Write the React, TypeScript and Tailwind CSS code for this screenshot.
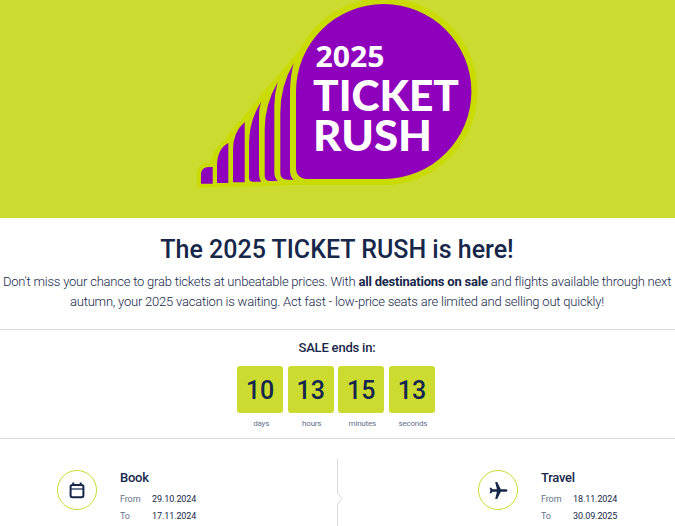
import type { ReactNode } from 'react';

const timer = [
  { value: '10', label: 'days' },
  { value: '13', label: 'hours' },
  { value: '15', label: 'minutes' },
  { value: '13', label: 'seconds' },
];

const outline = 'M201 183.7V175Q201 167 209 167H213Q217 149 228.3 143Q233 132 244.7 122Q249 117 261 102Q264.7 95 277.7 82Q283 76 293.7 63L310 44A87.7 87.5 0 1 1 383.7 179L293.7 181Z';

const logoShapes = [
  'M201 183.7V175Q201 167 209 167H212.7V183.7Z',
  'M217 183V166Q217 149 228.3 143V183Z',
  'M233 182.3V150Q233 132 244.7 122V182.3Z',
  'M249 178V144Q249 121 261 102Q259 108 259 116V174Q259 179 261 181.7H253Q249 181.7 249 178Z',
  'M264.7 176V129Q264.7 105 277.7 82Q274.3 94 274.3 106V172Q274.3 178 277.7 181H270Q264.7 181 264.7 176Z',
  'M280.3 173V113Q280.3 86 293.7 63Q290 77 290 92V170Q290 177 293.7 179.7H288Q280.3 179.7 280.3 173Z',
  'M296 91.5A87.7 87.5 0 1 1 383.7 179H306A10 10 0 0 1 296 169Z',
];

const RushLogo = () => (
  <svg viewBox="0 0 675 218" className="block w-full h-[218px]">
    <path d={outline} fill="#c9db00" stroke="#c9db00" strokeWidth="8" strokeLinejoin="round" />
    <path d={logoShapes[6]} fill="#c9db00" stroke="#c9db00" strokeWidth="12" />
    <g fill="#8e00bc">
      {logoShapes.map((d) => (
        <path key={d} d={d} />
      ))}
    </g>
    <g fill="#fff" className="font-['Lato',sans-serif]">
      <text x="315.5" y="67.3" fontSize="28" fontWeight="700" textLength="69" lengthAdjust="spacingAndGlyphs" className="font-['Open_Sans',sans-serif]">2025</text>
      <text x="313" y="111.2" fontSize="42" fontWeight="900" textLength="146" lengthAdjust="spacingAndGlyphs">TICKET</text>
      <text x="313" y="151" fontSize="42" fontWeight="900" textLength="119" lengthAdjust="spacingAndGlyphs">RUSH</text>
    </g>
  </svg>
);

const CalendarIcon = () => (
  <svg width="16" height="17" viewBox="0 0 16 17" fill="none" stroke="#16274a" strokeWidth="2">
    <rect x="1.6" y="3.1" width="12.8" height="12.2" rx="1.8" />
    <path d="M1.3 7H14.7" strokeWidth="1.2" />
    <path d="M4.3 .6V3.9M11.7 .6V3.9" />
  </svg>
);

const PlaneIcon = () => (
  <svg width="20" height="20" viewBox="0 0 20 20" fill="#16274a">
    <path d="M19.4 10.5C19.4 9.6 18.5 9.3 17.5 9.3H12.8L9.2 2H7.2L8.9 9.3H4.6L3.2 7.7H1.6L2.4 10.5L1.6 13.3H3.2L4.6 11.7H8.9L7.2 19H9.2L12.8 11.7H17.5C18.5 11.7 19.4 11.4 19.4 10.5Z" />
  </svg>
);

interface PeriodProps {
  title: string;
  from: string;
  to: string;
  icon: ReactNode;
}

const Period = ({ title, from, to, icon }: PeriodProps) => (
  <div className="flex">
    <div className="flex items-center justify-center w-10 h-10 mr-[23px] rounded-full border border-[#ccdb2f]">
      {icon}
    </div>
    <div>
      <h3 className="text-[13px] leading-4 font-medium tracking-[-0.25px]">{title}</h3>
      <div className="grid grid-cols-[32px_auto] mt-[5px] text-[9px] leading-[17px] tracking-[-0.1px]">
        <span className="text-[#65718a]">From</span>
        <span>{from}</span>
        <span className="text-[#65718a]">To</span>
        <span>{to}</span>
      </div>
    </div>
  </div>
);

const App = () => (
  <div className="w-[675px] h-[526px] overflow-hidden bg-white text-[#16274a] font-['Roboto',sans-serif]">
    <header className="bg-[#ccdb2f]">
      <RushLogo />
    </header>

    <section className="h-[111px] pt-4 pr-px text-center">
      <h1 className="text-[25px] leading-8 font-medium">The 2025 TICKET RUSH is here!</h1>
      <p className="mt-[6px] text-[13px] leading-5 font-light tracking-[-0.215px] whitespace-nowrap">
        Don't miss your chance to grab tickets at unbeatable prices. With{' '}
        <b className="font-bold">all destinations on sale</b> and flights available through next
        <br />
        autumn, your 2025 vacation is waiting. Act fast - low-price seats are limited and selling out quickly!
      </p>
    </section>

    {/* Countdown */}
    <section className="h-[110px] pt-[10px] pr-px border-y border-[#d9dde5] text-center">
      <h2 className="text-[13px] leading-4 font-medium tracking-[-0.2px]">SALE ends in:</h2>
      <div className="flex justify-center gap-[4.6px] mt-[10px] pr-[2px]">
        {timer.map((item) => (
          <div key={item.label}>
            <div className="w-[46px] h-[47px] rounded-[3px] bg-[#ccdb2f] text-[25px] leading-[49px] font-medium">
              {item.value}
            </div>
            <div className="mt-[6px] pl-[2px] text-[8px] leading-[10px] tracking-[-0.2px] text-[#65718a]">{item.label}</div>
          </div>
        ))}
      </div>
    </section>

    {/* Book and travel periods */}
    <section className="flex h-[87px]">
      <div className="w-[337px] pl-[57px] pt-[31px]">
        <Period title="Book" from="29.10.2024" to="17.11.2024" icon={<CalendarIcon />} />
      </div>
      <svg width="8" height="67" viewBox="0 0 8 67" fill="none" stroke="#d9d9d9" className="mt-5">
        <path d="M.5 0V34L5 39.5L.5 45V67" />
      </svg>
      <div className="pl-[133px] pt-[31px]">
        <Period title="Travel" from="18.11.2024" to="30.09.2025" icon={<PlaneIcon />} />
      </div>
    </section>
  </div>
);

export default App;
